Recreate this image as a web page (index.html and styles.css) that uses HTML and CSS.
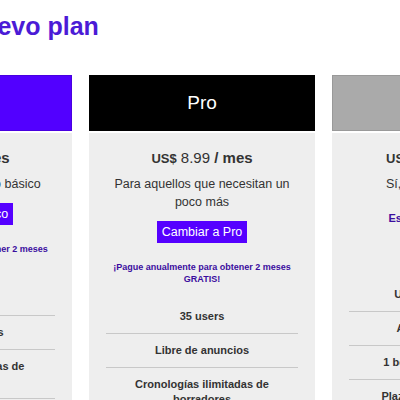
FILE: index.html
```html
<!DOCTYPE html>
<html lang="es">
<head>
<meta charset="utf-8">
<title>Nuevo plan</title>
<link rel="stylesheet" href="styles.css">
</head>
<body>
<div class="page">
  <h1 class="title">Elija un nuevo plan</h1>
  <div class="plans">
    <section class="plan">
      <header class="plan-head plan-head--basic">Básico</header>
      <div class="plan-body">
        <div class="price"><span class="cur">US$</span> <span class="amt">4.99</span> <span class="per">/ mes</span></div>
        <p class="desc">Para quien necesita lo básico</p>
        <div class="action"><a class="btn">Cambiar a Básico</a></div>
        <p class="promo">¡Pague anualmente para obtener 2 meses GRATIS!</p>
        <ul class="features">
          <li class="feature">5 users</li>
          <li class="feature">Incluye anuncios</li>
          <li class="feature">Cronologías limitadas de borradores</li>
          <li class="feature">Soporte por correo</li>
        </ul>
      </div>
    </section>
    <section class="plan">
      <header class="plan-head plan-head--pro">Pro</header>
      <div class="plan-body">
        <div class="price"><span class="cur">US$</span> <span class="amt">8.99</span> <span class="per">/ mes</span></div>
        <p class="desc">Para aquellos que necesitan un poco más</p>
        <div class="action"><a class="btn">Cambiar a Pro</a></div>
        <p class="promo">¡Pague anualmente para obtener 2 meses GRATIS!</p>
        <ul class="features">
          <li class="feature">35 users</li>
          <li class="feature">Libre de anuncios</li>
          <li class="feature">Cronologías ilimitadas de borradores</li>
          <li class="feature">Soporte prioritario</li>
        </ul>
      </div>
    </section>
    <section class="plan">
      <header class="plan-head plan-head--team">Empresa</header>
      <div class="plan-body plan-body--team">
        <div class="price"><span class="cur">US$</span> <span class="amt">149.99</span> <span class="per">/ mes</span></div>
        <p class="desc">Sí, lo quiero todo hoy</p>
        <p class="contact">Escríbanos un correo</p>
        <ul class="features">
          <li class="feature">Usuarios ilimitados</li>
          <li class="feature">Acceso anticipado</li>
          <li class="feature">1 borrador colaborativo</li>
          <li class="feature">Plazos de pago flexibles</li>
        </ul>
      </div>
    </section>
  </div>
</div>
</body>
</html>
```
FILE: styles.css
```css
html, body {
  margin: 0;
  padding: 0;
  background: #fff;
  overflow: hidden;
}

body {
  font-family: "Liberation Sans", Arial, sans-serif;
  color: #333;
}

.page {
  margin-left: -154px;
  padding-top: 11px;
  width: max-content;
}

.title {
  margin: 0 0 34px 25px;
  font-size: 25px;
  line-height: 30px;
  font-weight: bold;
  color: #4b1bd6;
}

.plans {
  display: flex;
  gap: 17px;
  align-items: flex-start;
}

.plan {
  width: 226px;
}

.plan-head {
  box-sizing: border-box;
  height: 56px;
  margin-bottom: 2px;
  border: 1px solid rgba(0, 0, 0, 0.12);
  display: flex;
  align-items: center;
  justify-content: center;
  color: #fff;
  font-size: 19px;
}

.plan-head--basic { background: #5200ff; }
.plan-head--pro { background: #000; }
.plan-head--team { background: #aaa; border-color: #999; }

.plan-body {
  background: #eee;
  padding: 16px 17px 24px;
  text-align: center;
}

.price {
  line-height: 18px;
  font-size: 15px;
  color: #333;
}

.cur {
  font-size: 13px;
  font-weight: bold;
}

.per {
  font-weight: bold;
}

.desc {
  margin: 7px 0 0;
  font-size: 12.5px;
  line-height: 18px;
}

.action {
  margin-top: 10px;
  height: 22px;
}

.btn {
  display: inline-block;
  height: 22px;
  line-height: 22px;
  padding: 0 5px;
  background: #5500ff;
  color: #fff;
  font-size: 12.5px;
}

.promo {
  margin: 18px 0 0;
  font-size: 9px;
  line-height: 12px;
  font-weight: bold;
  color: #3b0d9e;
}

.contact {
  margin: 18px 0 0;
  font-size: 11px;
  line-height: 14px;
  font-weight: bold;
  color: #3b0d9e;
}

.features {
  list-style: none;
  margin: 15px 0 0;
  padding: 0;
}

.plan-body--team .features {
  margin-top: 53px;
}

.feature {
  padding: 9px 5px;
  line-height: 15px;
  font-size: 11px;
  font-weight: bold;
  color: #333;
}

.feature + .feature {
  border-top: 1px solid #c8c8c8;
}
```
